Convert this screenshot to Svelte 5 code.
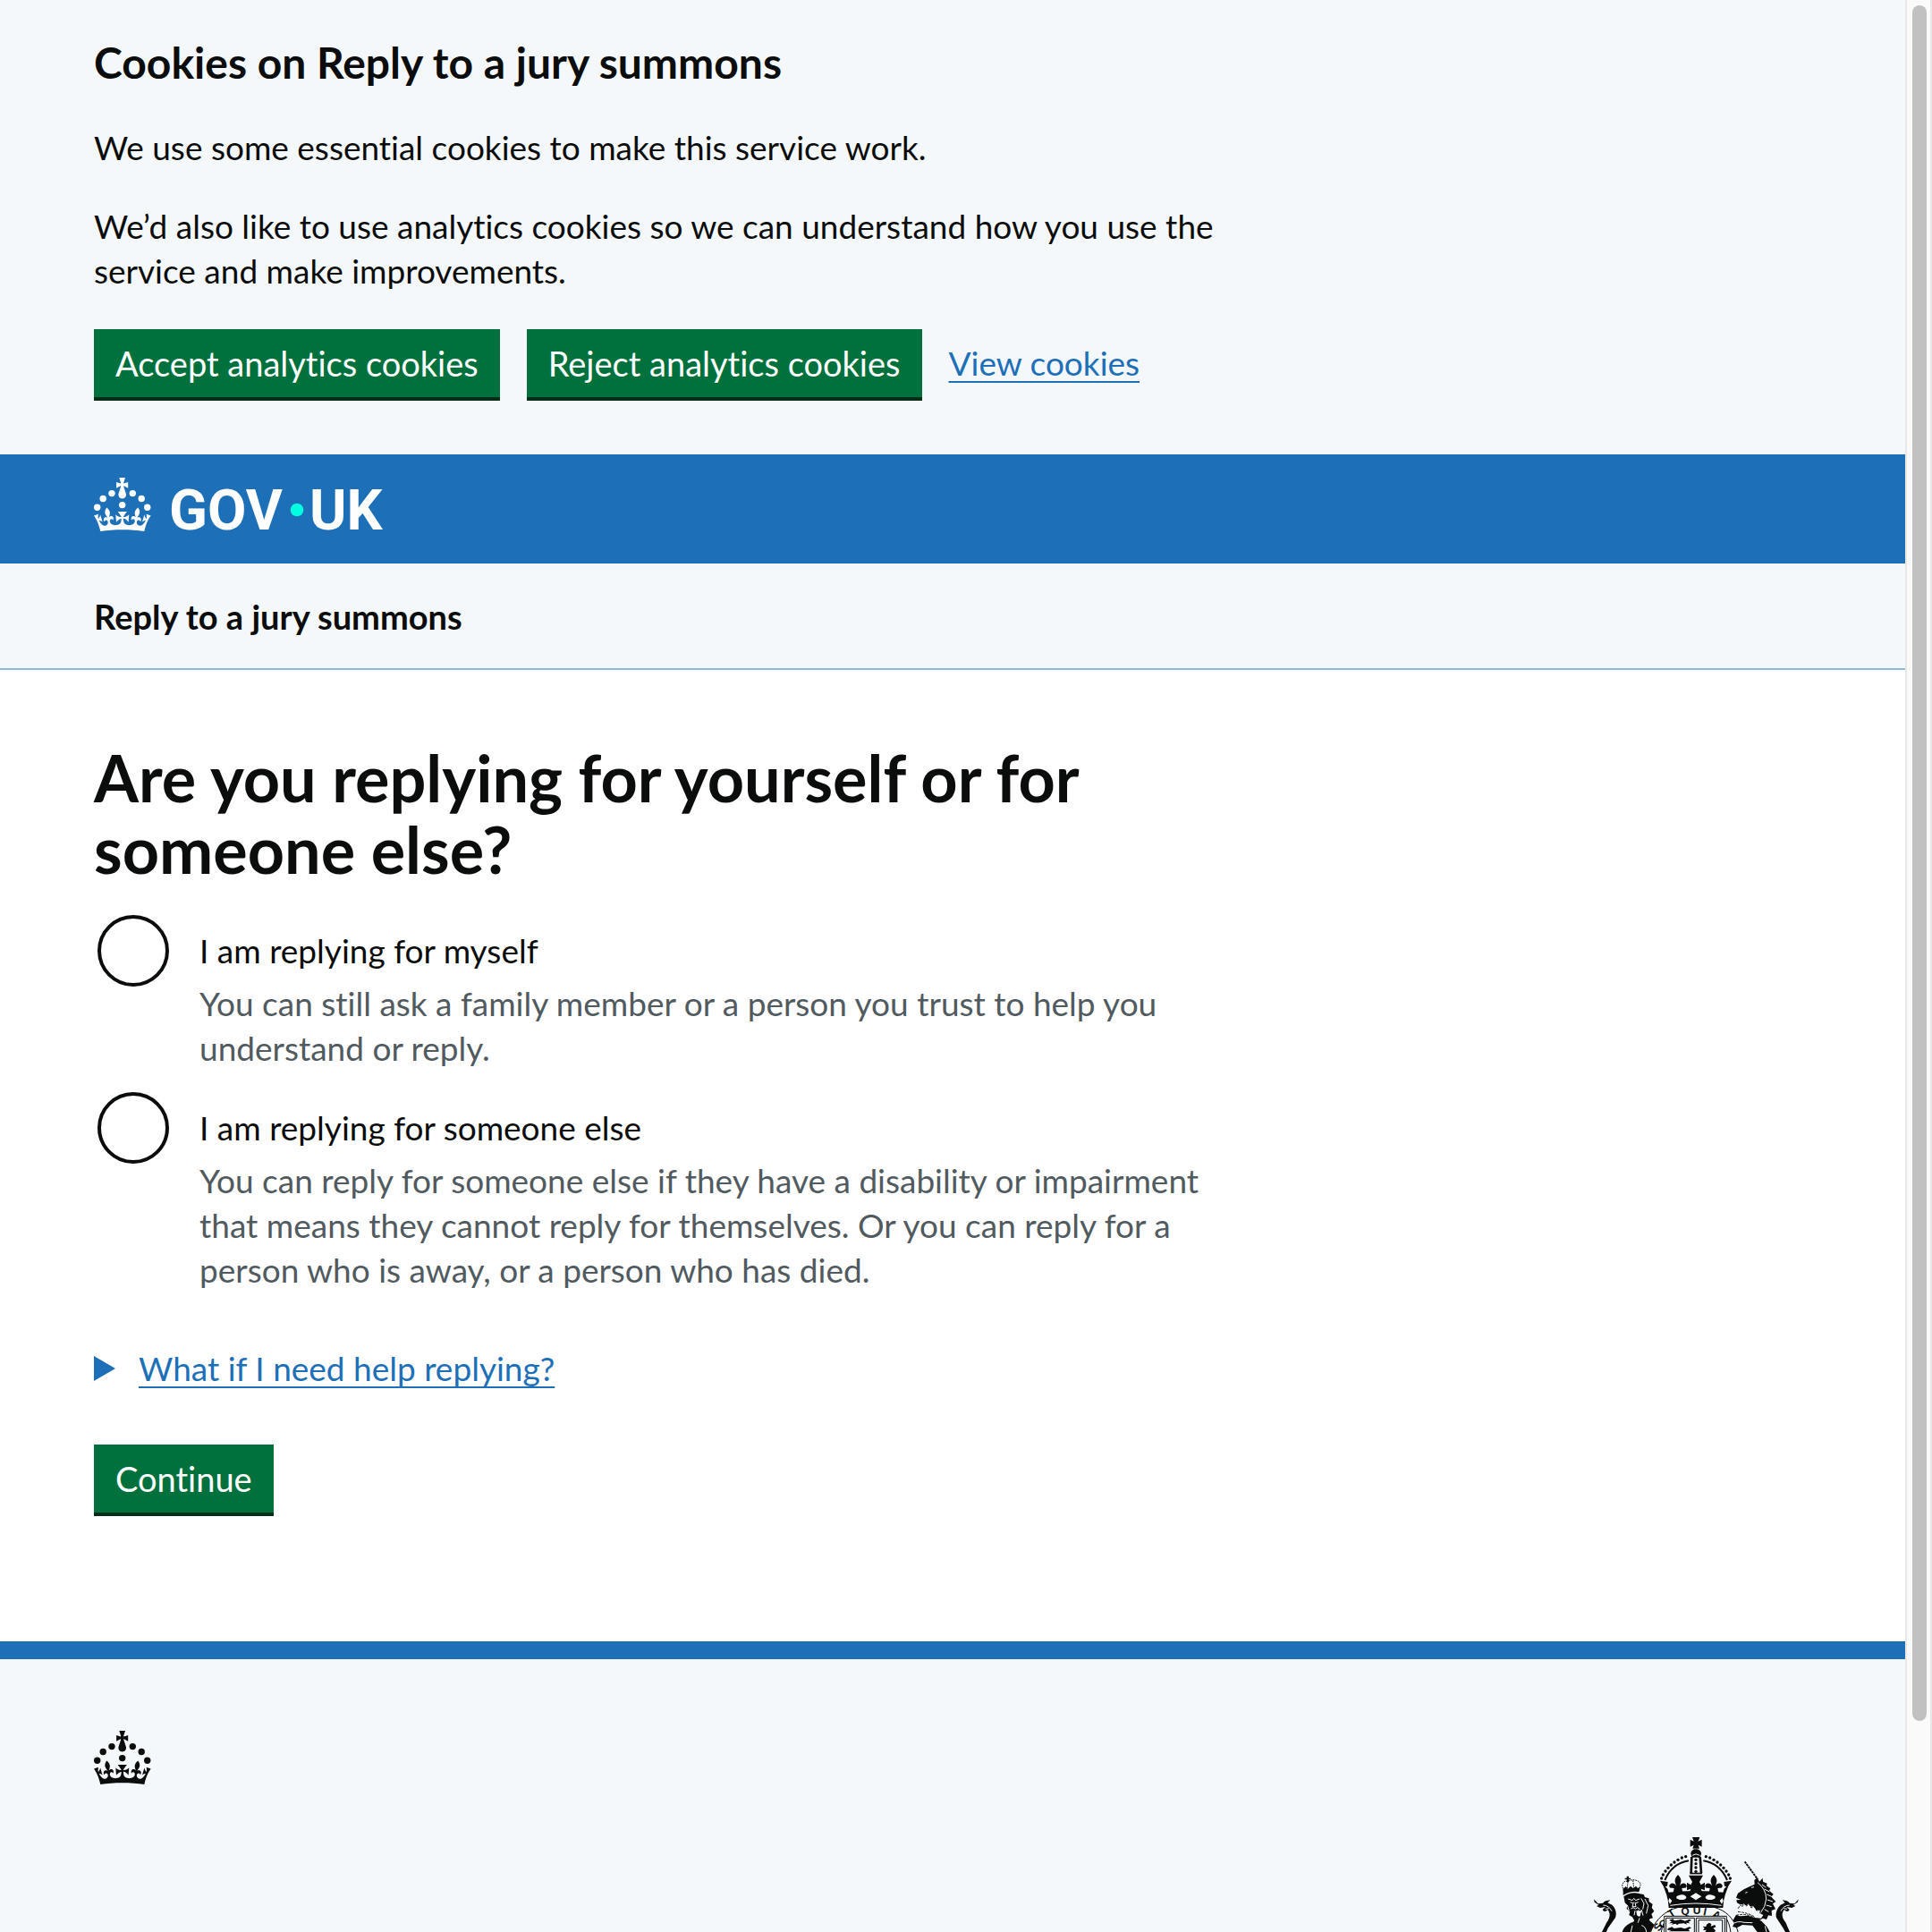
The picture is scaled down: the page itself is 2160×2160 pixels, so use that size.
<script>
  let reply = $state('');

  const options = [
    {
      value: 'myself',
      label: 'I am replying for myself',
      hint: 'You can still ask a family member or a person you trust to help you understand or reply.'
    },
    {
      value: 'someone-else',
      label: 'I am replying for someone else',
      hint: 'You can reply for someone else if they have a disability or impairment that means they cannot reply for themselves. Or you can reply for a person who is away, or a person who has died.'
    }
  ];

  // Pearls along the crown arches of the royal arms; mirrored about the centre line.
  const pearls = [
    [374, 107], [361, 111], [348, 118], [336, 126], [325, 135],
    [315, 145], [306, 156], [298, 168], [293, 180]
  ];
</script>

{#snippet crown()}
  <circle cx="20" cy="17.6" r="3.7" />
  <circle cx="10.2" cy="23.5" r="3.7" />
  <circle cx="3.7" cy="33.2" r="3.7" />
  <circle cx="31.7" cy="30.6" r="3.7" />
  <circle cx="43.3" cy="17.6" r="3.7" />
  <circle cx="53.2" cy="23.5" r="3.7" />
  <circle cx="59.7" cy="33.2" r="3.7" />
  <path d="M33.1,9.8c.2-.1.3-.3.5-.5l4.6,2.4v-6.8l-4.6,1.5c-.1-.2-.3-.3-.5-.5l1.9-5.9h-6.7l1.9,5.9c-.2.1-.3.3-.5.5l-4.6-1.5v6.8l4.6-2.4c.1.2.3.3.5.5l-2.6,8c-.9,2.8,1.2,5.7,4.1,5.7h0c3,0,5.1-2.9,4.1-5.7l-2.6-8ZM37,37.9s-3.4,3.8-4.1,6.1c2.2,0,4.2-.5,6.4-2.8l-.7,8.5c-2-2.8-4.4-4.1-5.7-3.8.1,3.1.5,6.7,5.8,7.2,3.7.3,6.7-1.5,7-3.8.4-2.6-2-4.3-3.7-1.6-1.4-4.5,2.4-6.1,4.9-3.2-1.9-4.5-1.8-7.7,2.4-10.9,3,4,2.6,7.3-1.2,11.1,2.4-1.3,6.2,0,4,4.6-1.2-2.8-3.7-2.2-4.2.2-.3,1.7.7,3.7,3,4.2,1.9.3,4.7-.9,7-5.9-1.3,0-2.4.7-3.9,1.7l2.4-8c.6,2.3,1.4,3.7,2.2,4.5.6-1.6.5-2.8,0-5.3l5,1.8c-2.6,3.6-5.2,8.7-7.3,17.5-7.4-1.1-15.7-1.7-24.5-1.7h0c-8.8,0-17.1.6-24.5,1.7-2.1-8.9-4.7-13.9-7.3-17.5l5-1.8c-.5,2.5-.6,3.7,0,5.3.8-.8,1.6-2.3,2.2-4.5l2.4,8c-1.5-1-2.6-1.7-3.9-1.7,2.3,5,5.2,6.2,7,5.9,2.3-.4,3.3-2.4,3-4.2-.5-2.4-3-3.1-4.2-.2-2.2-4.6,1.6-6,4-4.6-3.7-3.7-4.2-7.1-1.2-11.1,4.2,3.2,4.3,6.4,2.4,10.9,2.5-2.8,6.3-1.3,4.9,3.2-1.8-2.7-4.1-1-3.7,1.6.3,2.3,3.3,4.1,7,3.8,5.4-.5,5.7-4.2,5.8-7.2-1.3-.2-3.7,1-5.7,3.8l-.7-8.5c2.2,2.3,4.2,2.7,6.4,2.8-.7-2.3-4.1-6.1-4.1-6.1h10.6Z" />
{/snippet}

<div class="window">
  <div class="page">
    <section class="cookies" aria-label="Cookies on Reply to a jury summons">
      <div class="container">
        <div class="column">
          <h2>Cookies on Reply to a jury summons</h2>
          <p>We use some essential cookies to make this service work.</p>
          <p>We’d also like to use analytics cookies so we can understand how you use the service and make improvements.</p>
        </div>
        <div class="actions">
          <button type="button" class="button">Accept analytics cookies</button>
          <button type="button" class="button">Reject analytics cookies</button>
          <a class="link" href="#cookies">View cookies</a>
        </div>
      </div>
    </section>

    <header class="header">
      <div class="container">
        <a class="home" href="#home" aria-label="GOV.UK">
          <svg viewBox="0 0 324 60" fill="currentColor" aria-hidden="true">
            {@render crown()}
            <text class="wordmark" x="84" y="58">GOV</text>
            <circle class="dot" cx="227" cy="36" r="7.3" />
            <text class="wordmark" x="241" y="58">UK</text>
          </svg>
        </a>
      </div>
    </header>

    <nav class="service" aria-label="Service">
      <div class="container">
        <a href="#service">Reply to a jury summons</a>
      </div>
    </nav>

    <main class="container main">
      <form class="column" onsubmit={(e) => e.preventDefault()}>
        <fieldset>
          <legend><h1>Are you replying for yourself or for someone else?</h1></legend>
          <div class="radios">
            {#each options as o}
              <div class="option">
                <input type="radio" name="reply" id={o.value} value={o.value} bind:group={reply} aria-describedby="{o.value}-hint" />
                <label for={o.value}>{o.label}</label>
                <div class="hint" id="{o.value}-hint">{o.hint}</div>
              </div>
            {/each}
          </div>
        </fieldset>

        <details>
          <summary><span class="link">What if I need help replying?</span></summary>
        </details>

        <button type="submit" class="button">Continue</button>
      </form>
    </main>

    <footer>
      <div class="container">
        <svg class="crown" viewBox="0 0 64 60" fill="currentColor" aria-hidden="true">
          {@render crown()}
        </svg>
        <svg class="arms" viewBox="21 45 774 360" fill="currentColor" role="img" aria-label="Royal coat of arms">
          <!-- cross and orb -->
          <path d="M396 42h25l-5 14 12-6v24l-12-6 4 12h-23l4-12-12 6V50l12 6z" />
          <path d="M391 98c0-10 8-16 17-16s18 6 18 16l-4 12h-27z" />
          <path class="cut" d="M396 103q12-9 25 0" />
          <!-- centre arch -->
          <path d="M390 108h8l-2 54h-8zM418 108h8l4 54h-8z" />
          {#each [118, 131, 144, 157] as y}
            <circle cx="408" cy={y} r="5" />
          {/each}
          <path d="M388 161h41v5h-41z" />
          <!-- side arches with pearls -->
          <path class="line" d="M384 121c-37 6-65 30-80 65M433 121c37 6 65 30 80 65" />
          {#each pearls as [x, y]}
            <circle cx={x} cy={y} r="5" />
            <circle cx={816 - x} cy={y} r="5" />
          {/each}
          <!-- circlet: crosses and fleurs-de-lis -->
          <path d="M308 228q100-12 200 0-8 26-9 51H317q-1-25-9-51z" />
          {#each [348, 468] as x}
            <g transform="translate({x} 0)">
              <path d="M0 168c10 10 13 20 8 30l-3 8c6-10 15-13 22-6 5 6 1 13-6 12l-8 1 3 15h-32l3-15-8-1c-7 1-11-6-6-12 7-7 16-4 22 6l-3-8c-5-10-2-20 8-30z" />
            </g>
          {/each}
          <path d="M384 170h48l-12 22 5 10 13-8v26l-13-5 5 14h-44l5-14-13 5v-26l13 8 5-10z" />
          <path d="M288 188l26 4-2 14-7 1 8 8 5 16-10-1q-6-24-20-42zM528 188l-26 4 2 14 7 1-8 8-5 16 10-1q6-24 20-42z" />
          <path class="paper" d="M408 229l19 12-19 12-19-12zM351 237c11-5 25 0 25 8-3 8-21 9-31 3-5-4-2-9 6-11zM465 237c-11-5-25 0-25 8 3 8 21 9 31 3 5-4 2-9-6-11zM319 246l9 9-7 11-5-10zM497 246l-9 9 7 11 5-10z" />
          <path class="cut" d="M322 271q86-14 172 0" />
          <!-- garter and shield -->
          <path class="hair" d="M256 362c10-30 36-64 75-79 43-17 110-19 153-1 36 14 57 45 66 80" />
          <path class="hair" d="M292 362c3-23 10-37 22-53M525 362c-3-23-8-37-18-53" />
          <text class="motto" x="276" y="356" transform="rotate(-58 284 350)">S</text>
          <text class="motto" x="287" y="348" transform="rotate(-48 296 336)">O</text>
          <text class="motto" x="316" y="308" transform="rotate(-32 328 298)">T</text>
          <text class="motto" x="358" y="303" transform="rotate(-8 372 292)">Q</text>
          <text class="motto" x="398" y="301">U</text>
          <text class="motto" x="434" y="304" transform="rotate(12 438 292)">I</text>
          <text class="motto" x="464" y="314" transform="rotate(28 476 304)">A</text>
          <path class="paper" d="M302 307h209v60H302z" />
          <path class="hair" d="M302 365v-58h209v58M308 365v-52h95v52M409 365v-52h96v52M417 365v-45h80v45" />
          <path d="M318 320l13-4 5 6 22-4 14 5 14-6 7 3-10 6 5 5-13-2 4 6-11-4-17 1-6 5-4-5-16 3 7-5-14 1 9-6zM314 348l14-5 7 5 22-3 14 4 15-6 7 3-10 6 5 6H318l8-5-13 1z" />
          <path d="M452 329l8 4-2 8 14-5 3 7-9 4 8 8-4 8h-32l5-10-11 1 5-7-6-6 11 1 2-7z" />
          <!-- lion -->
          <path d="M176 173h7v6h6v5h-6v8h-7v-8h-6v-5h6z" />
          <path class="hair" stroke-dasharray="5 3" d="M166 222l-5-17c1-13 10-18 19-14 9-8 25-7 35-1 8 5 9 11 5 18l-3 13M180 192l-3 28M197 187l4 33" />
          <path d="M164 215l9-8 7 8 9-9 9 8 9-8 6 7 8-3-4 16q-24-6-53 11z" />
          <path d="M166 241q26-19 54-9l13 2 4 9 13 4 1 11 12 9-3 11 8 12-9 10 5 13-10 3-8 16-13-3-14 5-15-8-9-16-11-7 3-11-11-10 2-13-8-7z" />
          <path class="cut" d="M181 249l14 5 5-7 6 7 13-5M188 260l9 3M206 263l9-3M199 260l-4 15h12l-3-15M190 282l8-4 7 5 7-5 9 6M204 288l-3 16M215 286l2 18 9-18 5 19M224 247l10 17-4 20M237 249l11 22-6 27M178 270l6 18" />
          <path class="paper" d="M208 289h16l-2 16q-6 7-12-2z" />
          <path d="M161 360c4-16 20-29 37-34l15-19 12 14 18-8 25 22-14 27z" />
          <path class="cut" d="M219 313l-5 16M226 338q14 4 16 22M195 338l-5 22" />
          <!-- unicorn -->
          <path class="horn" d="M572 124l43 59" />
          <path d="M604 186l10-8 7 13 11-12 1 12 14 6-2 8 13 9-4 7 14 12-7 9 15 16-10 7 9 18-13 5 1 18-12-2-6 14-12-4-13 7-18-11 7-25-10-11-14 3-15-8-16-3-8-4-2-9 15-1-16-7 6-15 20-13 19-9 17-8z" />
          <path class="cut" d="M615 194q28 21 29 55-2 26-19 47M630 201l13 10M638 216l17 9M646 234l16 7M648 252l18 6M644 270l18 5M638 284l14 8M574 229l7-3M594 211l9-2" />
          <path d="M548 238l9-4 6 7-9 8z" />
          <path class="paper" d="M548 280l7-12 7 7 7-12 7 9 9-7 8 13 9-5 9 15 14-4-3 13 12 6-7 11-20-2-20 8-22-6-19 4z" />
          <path class="hair" stroke-dasharray="8 4" d="M550 281l7-12 6 7 7-12 7 9 9-7 8 13 9-5 9 15 14-4-3 13M549 292q35 4 54 16M544 304q27-8 61 7" />
          <path d="M533 320l10-18 12 5 28-2 25 8 20 10 18 19 10 18h-42l-16-22-34-2-18 10-15-4 6-12z" />
          <path class="cut" d="M528 335q18-14 42-7l28 1M640 340l5 20" />
          <!-- tails -->
          <path d="M66 250l14 15 17-2c4-7 10-8 24-10l-9 9 15 7c13 12 16 29 11 43l-25 35-6 15H92l17-34c11-16 14-31 3-43-5 8-14 8-17 0l10-9-18 3-12-6 7-4-14-9z" />
          <path class="cut" d="M97 270q20 1 29 20M105 283l11-2" />
          <path d="M753 250l-14 15-17-2c-4-7-10-8-24-10l9 9-15 7c-13 12-18 29-14 43l23 35 8 15h15l-15-34c-13-16-15-31-4-43 5 8 14 8 17 0l-10-9 18 3 12-6-7-4 14-9z" />
          <path class="cut" d="M722 270q-20 1-29 20M714 283l-11-2" />
        </svg>
      </div>
    </footer>
  </div>

  <div class="scrollbar" aria-hidden="true"><div class="thumb"></div></div>
</div>

<style>
  :global(body) {
    margin: 0;
    background: #fff;
  }

  .window {
    display: grid;
    grid-template-columns: minmax(0, 1fr) 30px;
    height: 100vh;
    overflow: hidden;
    color: #0b0c0c;
    font: 37px/50px Lato, "Open Sans", sans-serif;
    font-variant-ligatures: none;
  }

  .page {
    min-height: 0;
    overflow: hidden;
  }

  .container {
    max-width: 1920px;
    margin: 0 auto;
  }

  .column {
    max-width: 1270px;
  }

  .cookies {
    padding: 40px 0 60px;
    background: #f4f8fb;
  }

  h2 {
    margin: 0 0 40px;
    font-size: 48px;
    line-height: 60px;
  }

  p {
    margin: 0 0 38px;
  }

  .actions {
    display: flex;
    align-items: center;
    gap: 30px;
    padding-top: 2px;
  }

  .actions .link {
    padding-bottom: 4px;
  }

  .button {
    display: block;
    min-height: 80px;
    margin: 0;
    padding: 0 24px;
    border: 0;
    border-bottom: 4px solid #002d18;
    background: #00703c;
    color: #fff;
    font: 38px/50px Lato, "Open Sans", sans-serif;
    font-variant-ligatures: none;
    cursor: pointer;
  }

  .link {
    color: #1d70b8;
    text-decoration: underline 2px;
    text-underline-offset: 6px;
    text-decoration-skip-ink: none;
  }

  .header {
    padding: 26px 0 36px;
    background: #1d70b8;
  }

  .home {
    display: block;
    width: 324px;
    color: #fff;
  }

  .home svg {
    display: block;
    width: 324px;
    height: 60px;
  }

  .wordmark {
    font: 700 63px Roboto, sans-serif;
  }

  .dot {
    fill: #00ffe0;
  }

  .service {
    padding: 34px 0 33px;
    border-bottom: 2px solid #8eb8dc;
    background: #f4f8fb;
    font-size: 38px;
    font-weight: 700;
  }

  .service a {
    color: inherit;
    text-decoration: none;
  }

  .main {
    padding: 80px 0 140px;
  }

  fieldset {
    min-width: 0;
    margin: 0;
    padding: 0;
    border: 0;
  }

  legend {
    padding: 0;
  }

  h1 {
    margin: 0 0 30px;
    font-size: 72px;
    line-height: 80px;
  }

  .radios {
    display: grid;
    gap: 20px;
  }

  .option {
    display: grid;
    grid-template-columns: 88px minmax(0, 1fr);
    column-gap: 30px;
  }

  .option input {
    grid-row: span 2;
    appearance: none;
    box-sizing: border-box;
    width: 80px;
    height: 80px;
    margin: 4px;
    border: 4px solid #0b0c0c;
    border-radius: 50%;
    background: #fff;
  }

  .option input:checked {
    background: radial-gradient(circle, #0b0c0c 20px, #fff 21px);
  }

  .option label {
    padding: 19px 0 9px;
  }

  .hint {
    color: #505a5f;
  }

  details {
    margin: 60px 0;
  }

  summary {
    display: flex;
    align-items: center;
    gap: 26px;
    list-style: none;
    cursor: pointer;
  }

  summary::before {
    content: "";
    width: 24px;
    height: 28px;
    background: #1d70b8;
    clip-path: polygon(0 0, 100% 50%, 0 100%);
  }

  footer {
    padding: 80px 0;
    border-top: 20px solid #1d70b8;
    background: #f4f8fb;
  }

  .crown {
    display: block;
    width: 64px;
    height: 60px;
  }

  .arms {
    display: block;
    width: 258px;
    height: 120px;
    margin: 60px 0 0 auto;
    overflow: visible;
  }

  .cut {
    fill: none;
    stroke: #f4f8fb;
    stroke-width: 3;
  }

  .paper {
    fill: #f4f8fb;
  }

  .line {
    fill: none;
    stroke: currentColor;
    stroke-width: 6;
  }

  .hair {
    fill: none;
    stroke: currentColor;
    stroke-width: 3;
  }

  .horn {
    fill: none;
    stroke: currentColor;
    stroke-width: 6;
    stroke-dasharray: 8 2;
  }

  .motto {
    font: 700 36px "Liberation Sans", sans-serif;
  }

  .scrollbar {
    box-sizing: border-box;
    padding: 6px 4px 6px 6px;
    border: solid #e8e8e8;
    border-width: 0 2px;
    background: #fafafa;
  }

  .thumb {
    width: 16px;
    height: 89.3%;
    border-radius: 8px;
    background: #c1c1c1;
  }
</style>
